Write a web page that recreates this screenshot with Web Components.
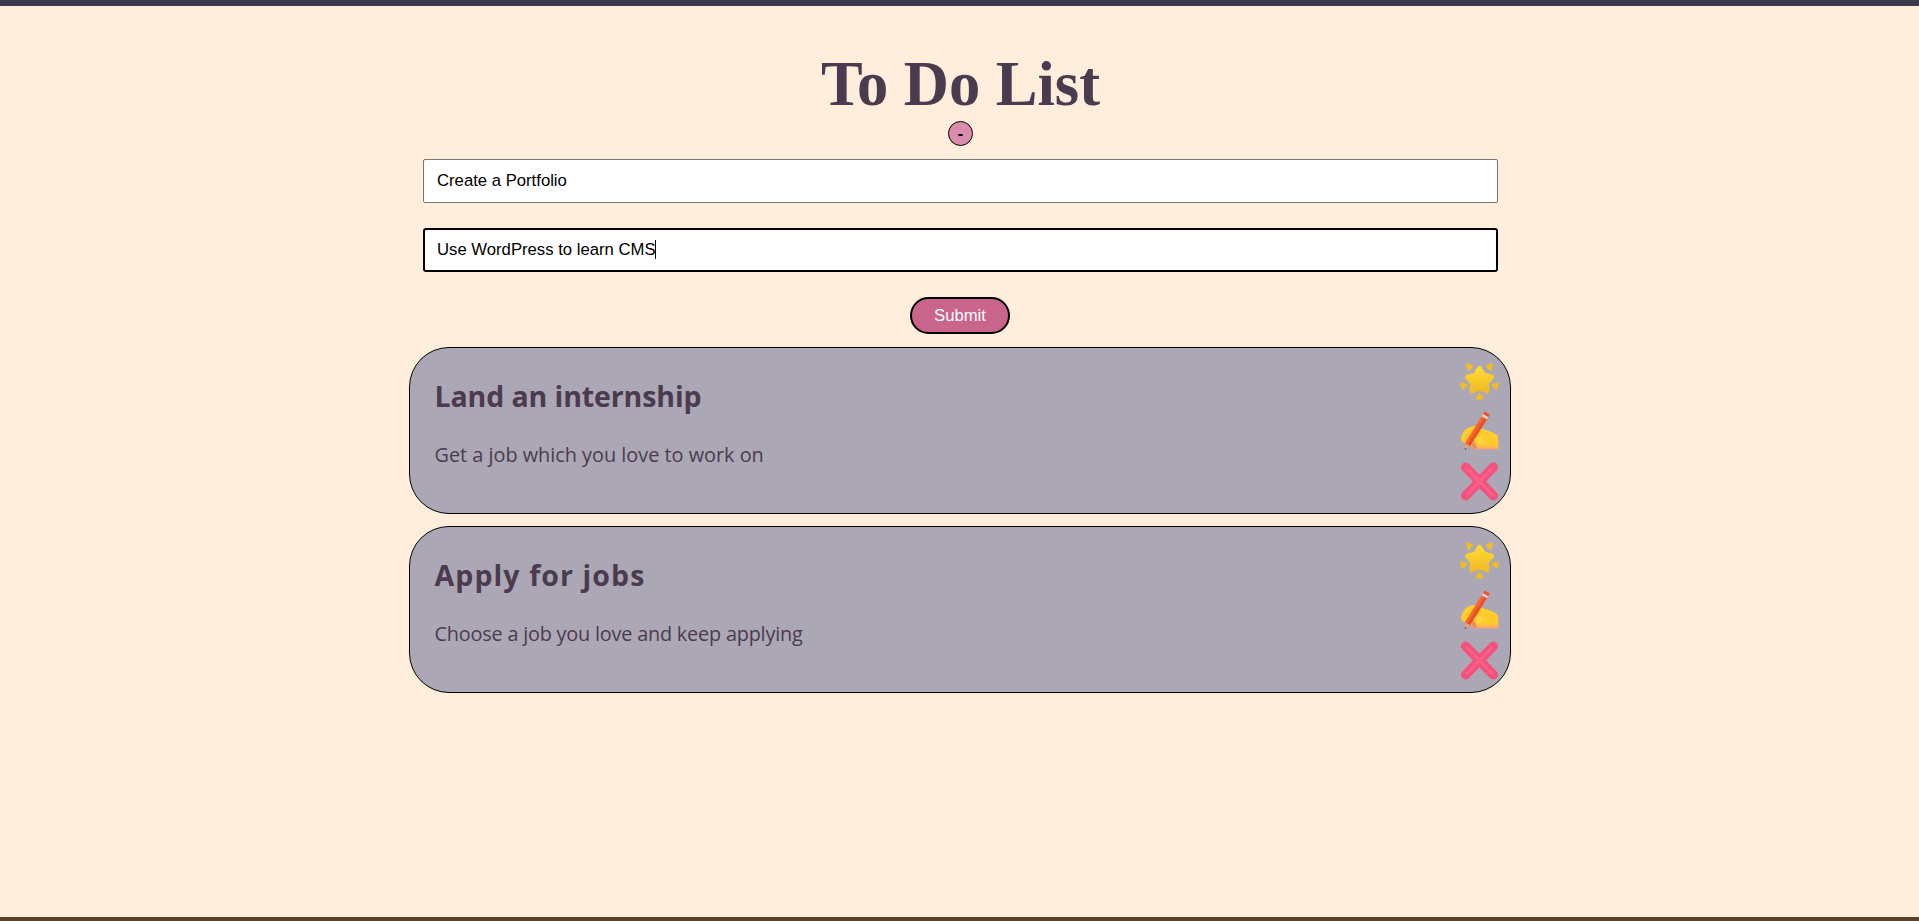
<!DOCTYPE html>
<html lang="en">
<head>
<meta charset="utf-8">
<title>To Do List</title>
<style>
  html, body { margin: 0; padding: 0; }
  body { background: #ffeedb; font-family: "Liberation Sans", Arial, sans-serif; }
</style>
</head>
<body>
<todo-app>
  <todo-form slot="form">
    <todo-field value="Create a Portfolio"></todo-field>
    <todo-field value="Use WordPress to learn CMS" focused></todo-field>
  </todo-form>
  <todo-card style="--heading-spacing: -0.1px" heading="Land an internship" text="Get a job which you love to work on"></todo-card>
  <todo-card style="--heading-spacing: 1.1px; --text-spacing: -0.2px" heading="Apply for jobs" text="Choose a job you love and keep applying"></todo-card>
</todo-app>

<script>
class TodoApp extends HTMLElement {
  connectedCallback() {
    if (this.shadowRoot) return;
    const shadow = this.attachShadow({ mode: "open" });
    shadow.innerHTML = `
      <style>
        :host {
          display: flex;
          flex-direction: column;
          align-items: center;
          box-sizing: border-box;
          height: 921px;
          border-top: 6px solid #3d3a50;
          border-bottom: 4px solid #5c4229;
          overflow: hidden;
        }
        h1 {
          margin: 43px 0 0 2px;
          font: bold 62.5px/70px "Liberation Serif", "Times New Roman", serif;
          color: #4b3b4f;
        }
        .toggle {
          width: 25px;
          height: 25px;
          margin: 2px 0 0 2px;
          padding: 0;
          box-sizing: border-box;
          border: 1px solid #000;
          border-radius: 50%;
          background: #d98cab;
          color: #000;
          font: bold 16px/22px "Liberation Sans", Arial, sans-serif;
          cursor: pointer;
        }
        .list {
          width: 1102px;
          display: flex;
          flex-direction: column;
          gap: 12px;
        }
      </style>
      <h1>To Do List</h1>
      <button class="toggle" type="button">-</button>
      <div class="list"><slot name="form"></slot><slot></slot></div>
    `;
  }
}

class TodoForm extends HTMLElement {
  connectedCallback() {
    if (this.shadowRoot) return;
    const shadow = this.attachShadow({ mode: "open" });
    shadow.innerHTML = `
      <style>
        :host {
          display: flex;
          flex-direction: column;
          align-items: center;
          gap: 25px;
          padding: 13px 13px 1px 14px;
        }
        button {
          width: 100px;
          height: 37px;
          box-sizing: border-box;
          border: 2px solid #000;
          border-radius: 19px;
          background: #c9648b;
          color: #fff;
          font: 16.7px "Liberation Sans", Arial, sans-serif;
          cursor: pointer;
        }
      </style>
      <slot></slot>
      <button type="button">Submit</button>
    `;
  }
}

class TodoField extends HTMLElement {
  connectedCallback() {
    if (this.shadowRoot) return;
    const shadow = this.attachShadow({ mode: "open" });
    shadow.innerHTML = `
      <style>
        :host { display: block; width: 100%; position: relative; }
        input {
          display: block;
          width: 100%;
          height: 44px;
          box-sizing: border-box;
          padding: 0 13.5px;
          border: 1px solid #767676;
          border-radius: 2px;
          background: #fff;
          color: #000;
          font: 16.7px "Liberation Sans", Arial, sans-serif;
          outline: none;
        }
        :host([focused]) input {
          padding: 0 12.5px;
          border: 2px solid #000;
          border-radius: 3px;
        }
        .caret {
          position: absolute;
          top: 12px;
          width: 1px;
          height: 19px;
          background: #000;
        }
      </style>
      <input type="text">
    `;
    const input = shadow.querySelector("input");
    input.value = this.getAttribute("value") || "";

    // the browser's own caret blinks, so the focused field draws a steady one
    if (this.hasAttribute("focused")) {
      const ctx = document.createElement("canvas").getContext("2d");
      ctx.font = '16.7px "Liberation Sans"';
      const caret = document.createElement("span");
      caret.className = "caret";
      caret.style.left = 14 + ctx.measureText(input.value).width + "px";
      shadow.appendChild(caret);
    }
  }
}

class TodoCard extends HTMLElement {
  connectedCallback() {
    if (this.shadowRoot) return;
    const shadow = this.attachShadow({ mode: "open" });
    shadow.innerHTML = `
      <style>
        :host {
          display: flex;
          justify-content: space-between;
          box-sizing: border-box;
          height: 167px;
          padding: 13px 11px 10px 25px;
          border: 1px solid #000;
          border-radius: 40px;
          background: #aba7b4;
          color: #4b3b4f;
        }
        h2 {
          margin: 17px 0 0;
          font: bold 28.5px/36px "Comic Sans MS", "Open Sans", sans-serif;
          letter-spacing: var(--heading-spacing, 0);
        }
        p {
          margin: 27px 0 0;
          font: 19.85px/27px "Comic Sans MS", "Open Sans", sans-serif;
          letter-spacing: var(--text-spacing, 0);
        }
        .actions {
          display: flex;
          flex-direction: column;
          gap: 10px;
        }
        svg { display: block; width: 40px; height: 40px; }
      </style>
      <div>
        <h2></h2>
        <p></p>
      </div>
      <div class="actions">
        <svg viewBox="0 0 40 40" aria-label="star">
          <defs>
            <linearGradient id="star" x1="0" y1="0" x2="0" y2="1">
              <stop offset="0" stop-color="#ffd92e"/>
              <stop offset="1" stop-color="#f0bb28"/>
            </linearGradient>
          </defs>
          <g fill="#f3bd22" stroke="#f3bd22" stroke-width="2" stroke-linejoin="round">
            <path d="M8 3l5 2.500-3.500 3.500z"/>
            <path d="M33 3l-5 2.500 3.500 3.500z"/>
            <path d="M2 22.500l5.500 1.500-4 3.500z"/>
            <path d="M39 22.500l-5.500 1.500 4 3.500z"/>
            <path d="M20.500 33l3 4.500h-6z"/>
          </g>
          <path d="M20.500 7.500l4 6.500 8 2.200-5.200 5.800.8 8-7.600-3-7.600 3 .8-8-5.200-5.800 8-2.200z" fill="url(#star)" stroke="url(#star)" stroke-width="5" stroke-linejoin="round"/>
        </svg>
        <svg viewBox="0 0 40 40" aria-label="edit">
          <defs>
            <linearGradient id="hand" x1="0" y1="0" x2="0" y2="1">
              <stop offset="0" stop-color="#ffcf2b"/>
              <stop offset=".82" stop-color="#ffc82f"/>
              <stop offset="1" stop-color="#fb9a86"/>
            </linearGradient>
          </defs>
          <path d="M2 28C2 24 6 18 9 17 12 15 16 15 18 16L26 19C31 20 36 22 39 25L39.500 38.500H15C13 36 11 33 8 32 5 32 2 31 2 28z" fill="url(#hand)"/>
          <path d="M5.900 32.200L24.400 2.500 29.600 5.500 11.100 35.200z" fill="#f8662a"/>
          <path d="M8.500 33.700L27 4 29.600 5.500 11.100 35.200z" fill="#e9502a"/>
          <path d="M5.900 32.200L11.100 35.200 6 39z" fill="#e8a26e"/>
          <path d="M5.700 37L7.800 38 6 39z" fill="#5d3040"/>
          <path d="M22.700 5.300L27.900 8.300 29.300 6 24.100 3z" fill="#f7d3d8"/>
          <path d="M24.100 3L29.300 6 30.800 3.500 25.600.5z" fill="#f04d2e"/>
          <path d="M16 27C20 25 25 26 27 29 26 33 21 35 17 33 15 32 15 28 16 27z" fill="#ffd23d"/>
          <path d="M12 33L16 31 18 37 15 38z" fill="#e88a60"/>
        </svg>
        <svg viewBox="0 0 40 40" aria-label="delete">
          <path d="M6.700 6.300l27.600 28.400M34.300 6.300L6.700 34.700" stroke="#f4527c" stroke-width="9.500" stroke-linecap="round" fill="none"/>
          <path d="M8 7.500l25 26M33 7.500l-25 26" stroke="#fb5f8a" stroke-width="3" stroke-linecap="round" fill="none"/>
        </svg>
      </div>
    `;
    shadow.querySelector("h2").textContent = this.getAttribute("heading");
    shadow.querySelector("p").textContent = this.getAttribute("text");
  }
}

customElements.define("todo-app", TodoApp);
customElements.define("todo-form", TodoForm);
customElements.define("todo-field", TodoField);
customElements.define("todo-card", TodoCard);
</script>
</body>
</html>
